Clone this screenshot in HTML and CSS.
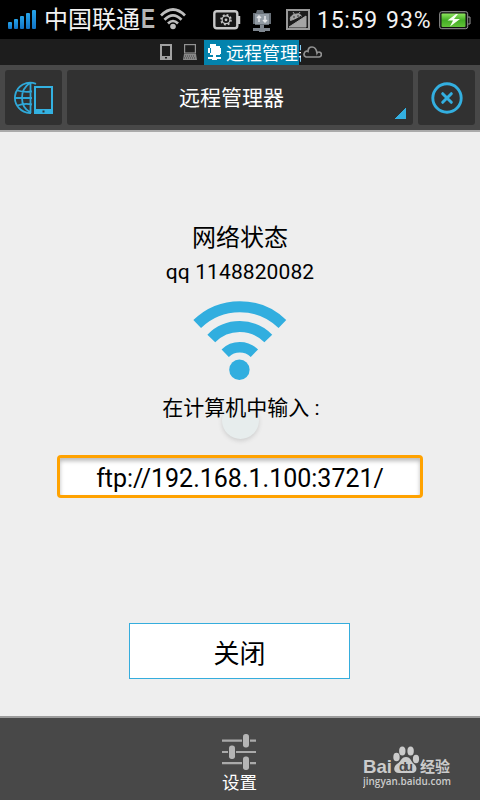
FILE: index.html
```html
<!DOCTYPE html>
<html lang="zh-CN">
<head>
<meta charset="utf-8">
<title>远程管理器</title>
<link rel="stylesheet" href="styles.css">
</head>
<body>
<div class="screen">
  <header class="status">
    <svg class="signal" width="30" height="21" viewBox="0 0 30 21"><defs><linearGradient id="sig" x1="0" y1="0" x2="0" y2="1"><stop offset="0" stop-color="#27a5ea"/><stop offset="1" stop-color="#1173c5"/></linearGradient></defs><g fill="url(#sig)"><rect x="0" y="13" width="4" height="7" rx="1"/><rect x="6" y="10" width="4" height="10" rx="1"/><rect x="12" y="7" width="4" height="13" rx="1"/><rect x="18" y="4" width="4" height="16" rx="1"/><rect x="24" y="1" width="4" height="19" rx="1"/></g></svg>
    <span class="carrier">中国联通</span>
    <span class="net">E</span>
    <svg class="swifi" width="28" height="24" viewBox="0 0 28 24"><g fill="none" stroke="#bdbdbd" stroke-width="2.700"><path d="M2 8.500Q14-3.500 26 8.500"/><path d="M5.500 12.700Q14 4 22.500 12.700"/><path d="M9 16.500Q14 11.500 19 16.500"/></g><circle cx="14" cy="19.500" r="2.800" fill="#bdbdbd"/></svg>
    <svg class="gear" width="28" height="20" viewBox="0 0 28 20"><rect x="1.300" y="1.300" width="23" height="17" rx="2.500" fill="#171717" stroke="#c7c7c7" stroke-width="2.400"/><path d="M26 6v8" stroke="#c7c7c7" stroke-width="2.500"/><circle cx="13" cy="9.800" r="5" fill="none" stroke="#c7c7c7" stroke-width="1.600" stroke-dasharray="1.900 2.027"/><circle cx="13" cy="9.800" r="3.900" fill="none" stroke="#c7c7c7" stroke-width="1.200"/><circle cx="13" cy="9.800" r="1.400" fill="#c7c7c7"/></svg>
    <svg class="folder" width="20" height="24" viewBox="0 0 20 24"><path fill="#687078" d="M1 4h3l1-3h6l1 3h7v11h-2v1H3v-1H1z"/><path fill="#929ba4" d="M3 5h14v10H3z"/><path d="M7 13V7m-2 2 2-2 2 2M13 7v6m-2-2 2 2 2-2" stroke="#e3e5e7" stroke-width="1.500" fill="none"/><path fill="#7f8790" d="M8 16h4v3h6v3h-5v1H7v-1H1v-3h7z"/></svg>
    <svg class="droid" width="24" height="21" viewBox="0 0 24 21"><rect x="1" y="1" width="22" height="19" fill="#1c1c1c" stroke="#999" stroke-width="2"/><path d="M4.500 11.500a6.500 5.500 0 0 1 11.500-4.500zM3 18 20 7v11zM7 3l2 3m5-3-1.500 2" fill="#a4a4a4" stroke="#a4a4a4"/><path d="M3 15 20 4" stroke="#1c1c1c"/><circle cx="8" cy="8" r=".8" fill="#222"/><circle cx="12" cy="7" r=".8" fill="#222"/></svg>
    <span class="time">15:59</span>
    <span class="percent">93%</span>
    <svg class="battery" width="33" height="19" viewBox="0 0 33 19"><defs><linearGradient id="bat" x1="0" y1="0" x2="0" y2="1"><stop offset="0" stop-color="#8ee65e"/><stop offset=".5" stop-color="#43ad25"/><stop offset="1" stop-color="#62c438"/></linearGradient></defs><rect x=".7" y=".7" width="28" height="17" rx="2" fill="#111" stroke="#999"/><path d="M29 6h2v7h-2" fill="none" stroke="#999"/><rect x="2.500" y="2.500" width="24" height="13.500" rx="1" fill="url(#bat)"/><path d="M17 3 8.500 9.500h5.500L11 15.500l10-7.500h-6L19 3z" fill="#f7fff2"/></svg>
  </header>
  <nav class="tabs">
    <svg class="t-phone" width="12" height="16" viewBox="0 0 12 16"><path fill="#a2a2a2" fill-rule="evenodd" d="M0 0h12v16H0zM2 2v10h8V2zM5 13v1.500h2V13z"/></svg>
    <svg class="t-pc" width="14" height="16" viewBox="0 0 14 16"><rect x="1.600" y=".6" width="10.800" height="8.400" fill="none" stroke="#929292" stroke-width="1.200"/><path fill="#888" d="M1 10h12l1 6H0z"/><path d="M2 12h10M1 14h12" stroke="#333" stroke-width=".8" stroke-dasharray="1 1"/></svg>
    <div class="active"><svg width="14" height="16" viewBox="0 0 14 16"><path fill="#fff" d="M2 2V0h6v2h4v2h1v6h-1v1H8v2h5v2H9v1H4v-1H0v-2h5v-2H2V9H0V4h2z"/><path d="M2.500 4v5" stroke="#0383ad"/></svg><span>远程管理器</span></div>
    <svg class="cloud" width="19" height="12" viewBox="0 0 19 12"><path d="M3 11h13a2.300 2.300 0 0 0-.2-5Q14.500 6 14 7 13 1 9 1T5 5.500A2.800 2.800 0 0 0 3 11z" fill="none" stroke="#929292" stroke-width="1.700"/></svg>
  </nav>
  <div class="toolbar">
    <button class="tool side"><svg width="40" height="34" viewBox="0 0 40 34"><g fill="none" stroke="#2fa8d8" stroke-width="1.800"><path d="M17 32A15.200 15.200 0 1 1 22 2.800M16 2Q8 7 8 17t8 14M16.500 1v31M1 17h17M3.500 9.500Q10 11.500 18 10.500M3.500 24.500Q10 22 18 23.500"/></g><path fill="#33b1e1" fill-rule="evenodd" d="M20 5h19v28H20zM22 7v21h15V7zM28.500 29.500v2h2v-2z"/></svg></button>
    <button class="tool title"><span>远程管理器</span><i class="corner"></i></button>
    <button class="tool side"><svg width="32" height="32" viewBox="0 0 32 32"><g fill="none" stroke="#33afe0"><circle cx="16" cy="16" r="14.200" stroke-width="2.900"/><path d="m11.700 11.700 8.600 8.600m0-8.600-8.600 8.600" stroke-width="3" stroke-linecap="round"/></g></svg></button>
  </div>
  <main>
    <div class="state">网络状态</div>
    <div class="ssid">qq 1148820082</div>
    <svg class="wifi" width="94" height="81" viewBox="0 0 94 81"><g fill="none" stroke="#31aedf" stroke-width="11"><path d="M4.200 24A61 61 0 0 1 89.400 24"/><path d="M18.300 38.500A40 40 0 0 1 75.300 38.500"/><path d="M32.200 53.200A21 21 0 0 1 61.400 53.200" stroke-width="10.500"/></g><circle cx="46.400" cy="69.700" r="10.200" fill="#31aedf"/></svg>
    <div class="hint"><i class="touch"></i><span>在计算机中输入 :</span></div>
    <div class="address">ftp://192.168.1.100:3721/</div>
    <button class="close">关闭</button>
  </main>
  <footer>
    <div class="settings">
      <svg width="34" height="36" viewBox="0 0 34 36"><path d="M0 6.700h20m8 0h6M0 18h6m8 0h20M0 29.200h20m8 0h6" stroke="#aaa" stroke-width="2.200"/><g fill="#b5b5b5"><rect x="21" y="0" width="6" height="13.500" rx="2.700"/><rect x="7" y="11.500" width="6" height="13.500" rx="2.700"/><rect x="21" y="22.500" width="6" height="13.500" rx="2.700"/></g></svg>
      <span>设置</span>
    </div>
    <div class="mark">
      <svg width="90" height="46" viewBox="0 0 90 46"><g fill="#cbcbcb"><text class="bai" x="0" y="27" textLength="29" lengthAdjust="spacingAndGlyphs">Bai</text><ellipse cx="33.500" cy="11" rx="3.200" ry="4.300"/><ellipse cx="39.300" cy="5" rx="3.200" ry="4.600"/><ellipse cx="47.600" cy="5" rx="3.200" ry="4.600"/><ellipse cx="53" cy="13" rx="3.100" ry="4.200"/><path d="M43 11c5 0 5 5 8 7 4 3 3 9-2 9H36c-6 0-6-6-2-9 4-2 4-7 9-7z"/><text class="exp" x="57" y="26" textLength="30">经验</text><text class="url" x="0" y="39" textLength="88" lengthAdjust="spacingAndGlyphs">jingyan.baidu.com</text></g><text class="du" x="36" y="25" textLength="14">du</text></svg>
    </div>
  </footer>
</div>
</body>
</html>
```
FILE: styles.css
```css
* { box-sizing: border-box; }
body { margin: 0; font-family: Roboto, "Noto Sans CJK SC", sans-serif; }
button { border: 0; padding: 0; font: inherit; }
svg { display: block; flex: none; }
.screen { width: 480px; height: 800px; display: flex; flex-direction: column; background: #eee; overflow: hidden; }
.status { height: 39px; flex: none; background: #000; color: #f3f3f3; display: flex; align-items: flex-start; white-space: nowrap; }
.signal { margin: 9px 6px 0 8px; }
.carrier { width: 97px; font-size: 24px; line-height: 41px; }
.net { width: 18px; color: #b5b5b5; font: bold 27px/39px "Liberation Sans", sans-serif; transform: scaleX(.78); transform-origin: left; }
.swifi { margin-top: 7px; }
.gear { margin: 10px 0 0 26px; }
.folder { margin: 9px 0 0 11px; }
.droid { margin: 9px 0 0 14px; }
.time { width: 69px; margin-left: 7px; font-size: 23px; line-height: 42px; letter-spacing: .7px; }
.percent { width: 53px; font-size: 23px; line-height: 42px; letter-spacing: 1px; }
.battery { margin-top: 11px; }
.tabs { height: 26px; flex: none; background: #1d1d1d; display: flex; align-items: flex-start; }
.t-phone { margin: 5px 11px 0 160px; }
.t-pc { margin: 5px 7px 0 0; }
.active { width: 97px; height: 25px; margin-top: 1px; background: linear-gradient(#0383ad, #0383ad) 0 0 / 95px 25px no-repeat; color: #fff; display: flex; overflow: hidden; font-size: 18px; line-height: 28px; white-space: nowrap; }
.active svg { margin: 4px 4px 0; }
.cloud { margin: 7px 0 0 2px; }
.toolbar { height: 67px; flex: none; padding: 5px; display: flex; gap: 5px; background: #484848; border-bottom: 2px solid #aaa; }
.tool { height: 55px; background: #313131; color: #fff; border-radius: 3px; display: flex; align-items: center; justify-content: center; position: relative; }
.side { width: 57px; }
.title { flex: 1; font-size: 21px; padding: 0 17px 4px 0; }
.corner { position: absolute; right: 7px; bottom: 6px; width: 11px; height: 11px; background: linear-gradient(135deg, transparent 50%, #33afe0 50%); }
main { flex: 1; display: flex; flex-direction: column; align-items: center; color: #000; }
.state { margin-top: 88px; font-size: 24px; line-height: 36px; }
.ssid { font-size: 21px; line-height: 30px; margin-top: 1px; letter-spacing: .1px; }
.wifi { margin-top: 13px; }
.hint { position: relative; left: 1px; font-size: 21px; line-height: 30px; margin-top: 12px; }
.hint span { position: relative; }
.touch { position: absolute; left: 60px; top: 9px; width: 37px; height: 37px; border-radius: 50%; background: #e7eded; box-shadow: 0 2px 4px #cfcfcf; clip-path: inset(9px -8px -8px -8px); }
.address { width: 366px; height: 43px; margin-top: 32px; border: 3px solid #ffa200; border-radius: 4px; background: #fff; box-shadow: inset 0 3px 4px #bbb; text-align: center; font-size: 25px; line-height: 41px; }
.close { width: 221px; height: 56px; margin: 125px 1px 0 0; border: 1px solid #35addd; background: #fff; color: #000; font-size: 26px; line-height: 60px; }
footer { height: 84px; flex: none; background: #484848; border-top: 2px solid #9c9c9c; display: grid; grid-template-columns: 363px 1fr; }
.settings { color: #fff; padding: 16px 0 0 222px; font-size: 17.5px; line-height: 22px; }
.settings span { display: block; margin-top: 2px; }
.mark { padding-top: 28px; }
.bai { font: bold 19px "Liberation Sans", sans-serif; }
.exp { font: bold 15px "Noto Sans CJK SC", sans-serif; }
.url { font: 600 11px "Open Sans", sans-serif; }
.du { font: bold 13px "Liberation Sans", sans-serif; fill: #484848; }
```
